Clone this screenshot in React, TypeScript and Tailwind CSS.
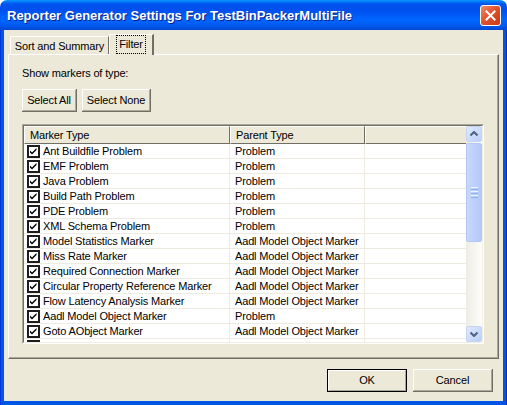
import React from "react";

const rows: [string, string][] = [
  ["Ant Buildfile Problem", "Problem"],
  ["EMF Problem", "Problem"],
  ["Java Problem", "Problem"],
  ["Build Path Problem", "Problem"],
  ["PDE Problem", "Problem"],
  ["XML Schema Problem", "Problem"],
  ["Model Statistics Marker", "Aadl Model Object Marker"],
  ["Miss Rate Marker", "Aadl Model Object Marker"],
  ["Required Connection Marker", "Aadl Model Object Marker"],
  ["Circular Property Reference Marker", "Aadl Model Object Marker"],
  ["Flow Latency Analysis Marker", "Aadl Model Object Marker"],
  ["Aadl Model Object Marker", "Problem"],
  ["Goto AObject Marker", "Aadl Model Object Marker"],
  ["Aadl Text Marker", "Problem"],
];

function Check() {
  return (
    <svg width="13" height="13" viewBox="0 0 13 13" className="shrink-0">
      <rect x="0" y="0" width="13" height="13" fill="#1c1c1c" />
      <rect x="2" y="2" width="9" height="9" fill="#fff" />
      <path d="M3 5.5 L5 7.5 L9.5 3 L9.5 5 L5 9.5 L3 7.5 Z" fill="#000" />
    </svg>
  );
}

function ClassicButton({ label, w, isDefault }: { label: string; w: string; isDefault?: boolean }) {
  return (
    <div
      className={`${w} h-[23px] flex items-stretch ${isDefault ? "border border-black" : "border-r border-b border-[#716F64]"}`}
    >
      <div className="flex-1 flex items-center justify-center border-t border-l border-white border-r border-b border-r-[#ACA899] border-b-[#ACA899] bg-[#ECE9D8]">
        {label}
      </div>
    </div>
  );
}

export default function App() {
  return (
    <div className="w-[507px] h-[405px] flex flex-col bg-white text-[11px] tracking-[-0.15px] text-black font-['Liberation_Sans',Arial,sans-serif] leading-none overflow-hidden">
      {/* Title bar */}
      <div className="h-[30px] shrink-0 rounded-t-[7px] flex items-center justify-between pl-[7px] pr-[6px] bg-[linear-gradient(to_bottom,#0997FF_0px,#0053EE_4px,#0050EE_10px,#0066FF_20px,#0058EE_26px,#0046D0_30px)]">
        <span className="text-white font-bold text-[13px] tracking-[0px] [text-shadow:1px_1px_0_#0A1E8C]">
          Reporter Generator Settings For TestBinPackerMultiFile
        </span>
        <div className="w-[21px] h-[21px] rounded-[3px] border border-white bg-[linear-gradient(135deg,#F28A6B,#E0532F_45%,#C93A17)] flex items-center justify-center">
          <svg width="11" height="11" viewBox="0 0 11 11">
            <path d="M1.5 1.5 L9.5 9.5 M9.5 1.5 L1.5 9.5" stroke="#fff" strokeWidth="2" strokeLinecap="square" />
          </svg>
        </div>
      </div>
      {/* Frame + body */}
      <div className="flex-1 flex flex-col bg-[linear-gradient(to_right,#0019CF_0px,#0055E5_1px,#0055E5_calc(100%-1px),#00138C)] px-[4px] pb-[4px]">
        <div className="flex-1 bg-[#ECE9D8] flex flex-col">
          {/* Tabs */}
          <div className="h-[24px] pt-[4px] pl-[6px] flex items-end">
            <div className="h-[18px] w-[99px] flex items-center justify-center pt-px border-t border-l border-white border-r border-r-[#716F64] rounded-tl-[2px] relative">
              Sort and Summary
            </div>
            <div className="h-[21px] w-[45px] -mb-px relative z-10 bg-[#ECE9D8] border-t border-l border-white border-r-2 border-r-[#716F64] rounded-tl-[2px] flex items-center justify-center">
              <span className="px-[2px] py-[3px] outline outline-1 outline-dotted outline-black -mt-px">Filter</span>
            </div>
          </div>
          {/* Panel */}
          <div className="ml-[4px] w-[491px] h-[305px] border-t border-l border-white border-r border-b border-r-[#716F64] border-b-[#716F64] flex flex-col">
            <div className="flex-1 border-r border-b border-[#ACA899] pl-[13px] pt-[13px] flex flex-col">
              <div className="h-[12px]">Show markers of type:</div>
              <div className="mt-[9px] flex gap-[5px]">
                <ClassicButton label="Select All" w="w-[55px]" />
                <ClassicButton label="Select None" w="w-[69px]" />
              </div>
              {/* Table */}
              <div className="mt-[12px] w-[462px] h-[220px] border-t border-l border-[#ACA899] border-r border-b border-r-white border-b-white flex">
                <div className="flex-1 border-t border-l border-[#716F64] border-r border-b border-r-[#F1EFE2] border-b-[#F1EFE2] flex overflow-hidden bg-white">
                  <div className="flex-1 flex flex-col overflow-hidden">
                    <div className="h-[18px] shrink-0 flex bg-[#ECE9D8]">
                      <div className="w-[206px] border-t border-l border-white border-r border-b border-r-[#716F64] border-b-[#716F64] flex items-center pl-[5px]">Marker Type</div>
                      <div className="w-[135px] border-t border-l border-white border-r border-b border-r-[#716F64] border-b-[#716F64] flex items-center pl-[5px]">Parent Type</div>
                      <div className="flex-1 border-t border-l border-white border-b border-b-[#716F64]" />
                    </div>
                    {rows.map(([a, b], i) => (
                      <div key={i} className="h-[15px] shrink-0 flex border-b border-[#EDEBE0]">
                        <div className="w-[206px] border-r border-[#EDEBE0] flex items-center pl-[3px] gap-[3px] whitespace-nowrap overflow-hidden">
                          <Check />
                          <span>{a}</span>
                        </div>
                        <div className="w-[135px] border-r border-[#EDEBE0] flex items-center pl-[5px] whitespace-nowrap overflow-hidden">{b}</div>
                        <div className="flex-1" />
                      </div>
                    ))}
                  </div>
                  {/* Scrollbar */}
                  <div className="w-[16px] shrink-0 flex flex-col bg-[linear-gradient(to_right,#EEEDE5,#FDFDFA)]">
                    <div className="h-[16px] rounded-[2px] border border-[#C5D4F5] bg-[linear-gradient(135deg,#E0EAFF,#BBCFF9)] flex items-center justify-center">
                      <svg width="8" height="6" viewBox="0 0 8 6"><path d="M0.5 4.5 L4 1 L7.5 4.5" stroke="#4D6185" strokeWidth="2" fill="none" /></svg>
                    </div>
                    <div className="h-[99px] mt-px rounded-[2px] border border-[#B4C8F5] bg-[linear-gradient(to_right,#C9D8FC,#BBD0FC_50%,#B4C9F6)] flex flex-col items-center justify-center gap-[1px]">
                      <div className="w-[7px] h-px bg-[#EEF4FE]" />
                      <div className="w-[7px] h-px bg-[#8CB0F8]" />
                      <div className="w-[7px] h-px bg-[#EEF4FE]" />
                      <div className="w-[7px] h-px bg-[#8CB0F8]" />
                      <div className="w-[7px] h-px bg-[#EEF4FE]" />
                      <div className="w-[7px] h-px bg-[#8CB0F8]" />
                    </div>
                    <div className="flex-1" />
                    <div className="h-[16px] rounded-[2px] border border-[#C5D4F5] bg-[linear-gradient(135deg,#E0EAFF,#BBCFF9)] flex items-center justify-center">
                      <svg width="8" height="6" viewBox="0 0 8 6"><path d="M0.5 1.5 L4 5 L7.5 1.5" stroke="#4D6185" strokeWidth="2" fill="none" /></svg>
                    </div>
                  </div>
                </div>
              </div>
            </div>
          </div>
          {/* Bottom buttons */}
          <div className="mt-[10px] pr-[10px] flex justify-end gap-[6px]">
            <ClassicButton label="OK" w="w-[80px]" isDefault />
            <ClassicButton label="Cancel" w="w-[80px]" />
          </div>
        </div>
      </div>
    </div>
  );
}
